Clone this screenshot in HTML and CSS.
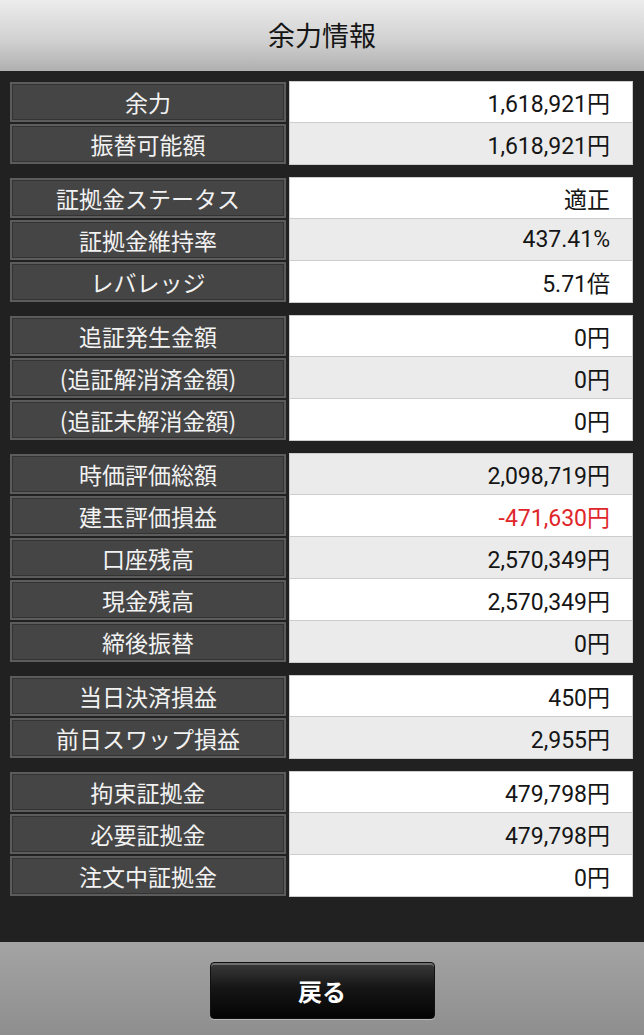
FILE: index.html
```html
<!DOCTYPE html>
<html>
<head>
	<title>余力情報</title>
	<meta name="viewport" content="width=device-width,initial-scale=1.0">
	<link rel="stylesheet" href="styles.css">
</head>
<body>
<div class="wrapper">
	<div class="head">
		<h1>余力情報</h1>
	</div>
	<div class="body">
		<div class="grp">
			<div class="row"><div class="lbl">余力</div><div class="val">1,618,921円</div></div>
			<div class="row"><div class="lbl">振替可能額</div><div class="val gray">1,618,921円</div></div>
		</div>
		<div class="grp">
			<div class="row"><div class="lbl">証拠金ステータス</div><div class="val">適正</div></div>
			<div class="row"><div class="lbl">証拠金維持率</div><div class="val gray">437.41%</div></div>
			<div class="row"><div class="lbl">レバレッジ</div><div class="val">5.71倍</div></div>
		</div>
		<div class="grp">
			<div class="row"><div class="lbl">追証発生金額</div><div class="val">0円</div></div>
			<div class="row"><div class="lbl">(追証解消済金額)</div><div class="val gray">0円</div></div>
			<div class="row"><div class="lbl">(追証未解消金額)</div><div class="val">0円</div></div>
		</div>
		<div class="grp">
			<div class="row"><div class="lbl">時価評価総額</div><div class="val gray">2,098,719円</div></div>
			<div class="row"><div class="lbl">建玉評価損益</div><div class="val minus">-471,630円</div></div>
			<div class="row"><div class="lbl">口座残高</div><div class="val gray">2,570,349円</div></div>
			<div class="row"><div class="lbl">現金残高</div><div class="val">2,570,349円</div></div>
			<div class="row"><div class="lbl">締後振替</div><div class="val gray">0円</div></div>
		</div>
		<div class="grp">
			<div class="row"><div class="lbl">当日決済損益</div><div class="val">450円</div></div>
			<div class="row"><div class="lbl">前日スワップ損益</div><div class="val gray">2,955円</div></div>
		</div>
		<div class="grp">
			<div class="row"><div class="lbl">拘束証拠金</div><div class="val">479,798円</div></div>
			<div class="row"><div class="lbl">必要証拠金</div><div class="val gray">479,798円</div></div>
			<div class="row"><div class="lbl">注文中証拠金</div><div class="val">0円</div></div>
		</div>
	</div>
	<div class="foot">
		<button class="back_btn">戻る</button>
	</div>
</div>
</body>
</html>
```

FILE: styles.css
```css
*{margin: 0;padding: 0;box-sizing: border-box;font-family: "Noto Sans CJK JP", sans-serif;}
body{background: #212121;}
.wrapper{width: 100%;height: 100vh;display: flex;flex-direction: column;}
.head{height: 71px;flex: none;display: flex;justify-content: center;align-items: center;background: linear-gradient(#ececec, #d2d2d2 55%, #b0b0b0);}
.head h1{font-size: 27px;font-weight: normal;color: #151515;padding-bottom: 2px;}
.body{flex: 1;background: #212121;padding: 10px 11px 0 10px;}
.grp{margin-bottom: 12px;}
.grp .row:first-child .val{border-top: 1px solid #cdcdcd;}
.row{display: flex;height: 42px;}
.lbl{width: 276px;height: 40px;margin: 1px 3px 1px 0;flex: none;display: flex;justify-content: center;align-items: center;background: #454545;border: 2px solid #5c5c5c;box-shadow: inset 0 0 0 1px #333;color: #f2f2f2;font-size: 23px;}
.val{flex: 1;display: flex;justify-content: flex-end;align-items: center;padding-right: 22px;background: #fff;border: 1px solid #cdcdcd;border-top: none;font-family: Roboto, "Noto Sans CJK JP", sans-serif;font-size: 23px;color: #151515;}
.val.gray{background: #ebebeb;}
.val.minus{color: #e0262b;}
.foot{height: 93px;flex: none;display: flex;justify-content: center;align-items: flex-start;padding-top: 20px;background: linear-gradient(#a4a4a4, #8e8e8e);}
.back_btn{width: 225px;height: 57px;border: 1px solid #111;border-radius: 4px;outline: none;cursor: pointer;background: linear-gradient(#3a3a3a, #161616 45%, #040404);box-shadow: inset 0 2px 0 #6e6e6e, 0 1px 0 rgba(255,255,255,0.35);color: #fff;font-size: 24px;font-weight: bold;}
```
